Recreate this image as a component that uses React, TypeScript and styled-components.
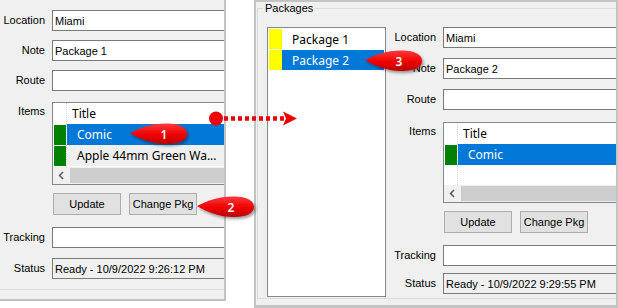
import React from "react";
import styled, { createGlobalStyle } from "styled-components";

const GlobalStyle = createGlobalStyle`
  html, body { margin: 0; padding: 0; background: #ffffff; }
  body { font-family: "Liberation Sans", Arial, sans-serif; }
  *, *::before, *::after { box-sizing: border-box; }
`;

const Stage = styled.div`
  position: relative;
  width: 618px;
  height: 308px;
  display: flex;
  justify-content: space-between;
  align-items: flex-start;
  background: #ffffff;
  overflow: hidden;
`;

/* ---------- panels ---------- */

const LeftPanel = styled.div`
  flex: none;
  width: 226px;
  height: 301px;
  background: #f0f0f0;
  border-right: 2px solid #c3c3c3;
  border-bottom: 2px solid #c3c3c3;
  overflow: hidden;
`;

const LeftGroup = styled.div`
  width: 320px;
  height: 290px;
  padding-top: 10px;
  border-bottom: 1px solid #dcdcdc;
`;

const RightPanel = styled.div`
  flex: none;
  width: 364px;
  height: 308px;
  background: #f0f0f0;
  border: 2px solid #c3c3c3;
  border-bottom-width: 3px;
  padding-left: 1px;
  overflow: hidden;
`;

const GroupBox = styled.fieldset`
  margin: 0;
  min-width: 0;
  width: 420px;
  border: 1px solid #dcdcdc;
  padding: 12px 0 1px 9px;
`;

const GroupLegend = styled.legend`
  font: 11px/13px "Liberation Sans", Arial, sans-serif;
  color: #000;
  padding: 0 2px;
  margin-left: -4px;
`;

const GroupContent = styled.div`
  display: flex;
  align-items: flex-start;
`;

/* ---------- list box ---------- */

const ListBox = styled.div`
  flex: none;
  width: 119px;
  height: 270px;
  border: 1px solid #828790;
  background: #fff;
  padding: 1px;
  font: 12px "Noto Sans", "Open Sans", sans-serif;
`;

const ListItem = styled.div`
  display: flex;
  height: 21px;
  padding-bottom: 1px;
`;

const Swatch = styled.div<{ $color: string }>`
  flex: none;
  width: 13px;
  background: ${(p) => p.$color};
`;

const ItemText = styled.div<{ $sel?: boolean }>`
  flex: 1;
  display: flex;
  align-items: center;
  padding-left: 10px;
  background: ${(p) => (p.$sel ? "#0078d7" : "transparent")};
  color: ${(p) => (p.$sel ? "#fff" : "#000")};
  white-space: nowrap;
`;

/* ---------- form ---------- */

const Pane = styled.div`
  flex: none;
  width: 330px;
  display: flex;
  flex-direction: column;
`;

const Row = styled.div<{ $mt: number; $top?: boolean }>`
  display: flex;
  align-items: ${(p) => (p.$top ? "flex-start" : "center")};
  margin-top: ${(p) => p.$mt}px;
`;

const Label = styled.div<{ $w: number; $pt?: number }>`
  flex: none;
  width: ${(p) => p.$w}px;
  padding-right: 7px;
  padding-top: ${(p) => p.$pt ?? 0}px;
  text-align: right;
  font-size: 11px;
  line-height: 13px;
  color: #000;
`;

const TextBox = styled.input<{ $ro?: boolean }>`
  flex: none;
  width: 300px;
  height: 21px;
  margin: 0;
  border: 1px solid #7a7a7a;
  border-radius: 0;
  outline: none;
  background: ${(p) => (p.$ro ? "#f0f0f0" : "#fff")};
  padding: 0 0 0 2px;
  font: 11px/19px "Liberation Sans", Arial, sans-serif;
  color: #000;
`;

const ButtonRow = styled.div<{ $ml: number; $mt: number }>`
  display: flex;
  gap: 8px;
  margin-left: ${(p) => p.$ml}px;
  margin-top: ${(p) => p.$mt}px;
`;

const Button = styled.button`
  width: 68px;
  height: 22px;
  margin: 0;
  padding: 0;
  border: 1px solid #adadad;
  border-radius: 0;
  background: #e1e1e1;
  font: 11px "Liberation Sans", Arial, sans-serif;
  color: #000;
`;

/* ---------- data grid ---------- */

const Grid = styled.div<{ $h: number }>`
  flex: none;
  width: 300px;
  height: ${(p) => p.$h}px;
  border: 1px solid #828790;
  background: #fff;
  display: flex;
  flex-direction: column;
  font: 12px "Noto Sans", "Open Sans", sans-serif;
  color: #000;
  overflow: hidden;
`;

const GridRow = styled.div<{ $fill?: boolean }>`
  display: flex;
  flex: ${(p) => (p.$fill ? "1" : "none")};
  height: ${(p) => (p.$fill ? "auto" : "21px")};
`;

const RowHead = styled.div`
  flex: none;
  width: 14px;
  border-right: 1px dotted #d4d4d4;
  padding: 1px 0 0 1px;
`;

const Marker = styled.div<{ $color: string }>`
  width: 12px;
  height: 20px;
  background: ${(p) => p.$color};
`;

const Cell = styled.div<{ $sel?: boolean; $alt?: boolean; $pad: number }>`
  flex: 1;
  display: flex;
  align-items: center;
  padding-left: ${(p) => p.$pad}px;
  background: ${(p) => (p.$sel ? "#0078d7" : p.$alt ? "#f0f0f0" : "#fff")};
  color: ${(p) => (p.$sel ? "#fff" : "#000")};
  white-space: nowrap;
`;

const HScroll = styled.div`
  flex: none;
  height: 17px;
  display: flex;
  background: #f0f0f0;
`;

const ScrollArrow = styled.div`
  flex: none;
  width: 17px;
  display: flex;
  align-items: center;
  justify-content: center;
`;

const Thumb = styled.div`
  flex: 1;
  margin: 1px 0;
  background: #cdcdcd;
`;

/* ---------- overlay annotations ---------- */

const Overlay = styled.svg`
  position: absolute;
  left: 0;
  top: 0;
  width: 618px;
  height: 308px;
  pointer-events: none;
  overflow: visible;
`;

const CalloutNum = styled.text`
  font: 600 12px "Noto Sans", "Open Sans", sans-serif;
  fill: #ffffff;
`;

type GridItem = { title: string; sel?: boolean; alt?: boolean };

type Spacing = {
  note: number;
  route: number;
  items: number;
  buttons: number;
  tracking: number;
  status: number;
};

type FormProps = {
  labelW: number;
  note: string;
  status: string;
  gridH: number;
  items: GridItem[];
  sp: Spacing;
};

const ChevronLeft = () => (
  <svg width="7" height="9" viewBox="0 0 7 9">
    <path d="M5 1 L1.6 4.5 L5 8" fill="none" stroke="#606060" strokeWidth="1.6" />
  </svg>
);

const DataGrid = ({ h, items }: { h: number; items: GridItem[] }) => (
  <Grid $h={h}>
    <GridRow>
      <RowHead />
      <Cell $pad={5}>Title</Cell>
    </GridRow>
    {items.map((it) => (
      <GridRow key={it.title}>
        <RowHead>
          <Marker $color="#008000" />
        </RowHead>
        <Cell $pad={10} $sel={it.sel} $alt={it.alt}>
          {it.title}
        </Cell>
      </GridRow>
    ))}
    <GridRow $fill>
      <RowHead />
      <Cell $pad={0} />
    </GridRow>
    <HScroll>
      <ScrollArrow>
        <ChevronLeft />
      </ScrollArrow>
      <Thumb />
    </HScroll>
  </Grid>
);

const PackageForm = ({ labelW, note, status, gridH, items, sp }: FormProps) => (
  <Pane>
    <Row $mt={0}>
      <Label $w={labelW}>Location</Label>
      <TextBox readOnly value="Miami" />
    </Row>
    <Row $mt={sp.note}>
      <Label $w={labelW}>Note</Label>
      <TextBox readOnly value={note} />
    </Row>
    <Row $mt={sp.route}>
      <Label $w={labelW}>Route</Label>
      <TextBox readOnly value="" />
    </Row>
    <Row $mt={sp.items} $top>
      <Label $w={labelW} $pt={3}>
        Items
      </Label>
      <DataGrid h={gridH} items={items} />
    </Row>
    <ButtonRow $ml={labelW + 1} $mt={sp.buttons}>
      <Button>Update</Button>
      <Button>Change Pkg</Button>
    </ButtonRow>
    <Row $mt={sp.tracking}>
      <Label $w={labelW}>Tracking</Label>
      <TextBox readOnly value="" />
    </Row>
    <Row $mt={sp.status}>
      <Label $w={labelW}>Status</Label>
      <TextBox readOnly $ro value={status} />
    </Row>
  </Pane>
);

const CALLOUT_PATH =
  "M0,0 C10,-5 20,-9.5 37,-9.5 C50,-9.5 57,-5 57,1 C57,7 50,11 37,11 C22,11 10,6 0,0 Z";

const Callout = ({ x, y, n }: { x: number; y: number; n: string }) => (
  <g transform={`translate(${x},${y})`}>
    <path d={CALLOUT_PATH} fill="url(#calloutFill)" filter="url(#calloutShadow)" />
    <CalloutNum x={34} y={1} textAnchor="middle" dominantBaseline="central">
      {n}
    </CalloutNum>
  </g>
);

export default function App() {
  return (
    <>
      <GlobalStyle />
      <Stage>
        <LeftPanel>
          <LeftGroup>
            <PackageForm
              labelW={52}
              note="Package 1"
              status="Ready - 10/9/2022 9:26:12 PM"
              gridH={83}
              items={[
                { title: "Comic", sel: true },
                { title: "Apple 44mm Green Wa...", alt: true },
              ]}
              sp={{ note: 9, route: 9, items: 11, buttons: 8, tracking: 12, status: 10 }}
            />
          </LeftGroup>
        </LeftPanel>

        <RightPanel>
          <GroupBox>
            <GroupLegend>Packages</GroupLegend>
            <GroupContent>
              <ListBox>
                <ListItem>
                  <Swatch $color="#ffff00" />
                  <ItemText>Package 1</ItemText>
                </ListItem>
                <ListItem>
                  <Swatch $color="#ffff00" />
                  <ItemText $sel>Package 2</ItemText>
                </ListItem>
              </ListBox>
              <PackageForm
                labelW={57}
                note="Package 2"
                status="Ready - 10/9/2022 9:29:55 PM"
                gridH={81}
                items={[{ title: "Comic", sel: true }]}
                sp={{ note: 10, route: 10, items: 12, buttons: 8, tracking: 12, status: 7 }}
              />
            </GroupContent>
          </GroupBox>
        </RightPanel>

        <Overlay viewBox="0 0 618 308">
          <defs>
            <linearGradient id="calloutFill" x1="0" y1="0" x2="0" y2="1">
              <stop offset="0%" stopColor="#ff3a3a" />
              <stop offset="55%" stopColor="#f00000" />
              <stop offset="100%" stopColor="#b80000" />
            </linearGradient>
            <filter id="calloutShadow" x="-30%" y="-50%" width="160%" height="200%">
              <feDropShadow dx="1.5" dy="2" stdDeviation="1.5" floodColor="#000" floodOpacity="0.4" />
            </filter>
          </defs>
          <circle cx={216} cy={118.5} r={7} fill="#ee0000" />
          <line
            x1={224}
            y1={118.5}
            x2={284}
            y2={118.5}
            stroke="#ee0000"
            strokeWidth={4.5}
            strokeDasharray="4 3"
          />
          <polygon points="283,111.5 297,118.5 283,125.5 286,118.5" fill="#ee0000" />
          <Callout x={130} y={133} n="1" />
          <Callout x={197} y={206} n="2" />
          <Callout x={365} y={60} n="3" />
        </Overlay>
      </Stage>
    </>
  );
}
